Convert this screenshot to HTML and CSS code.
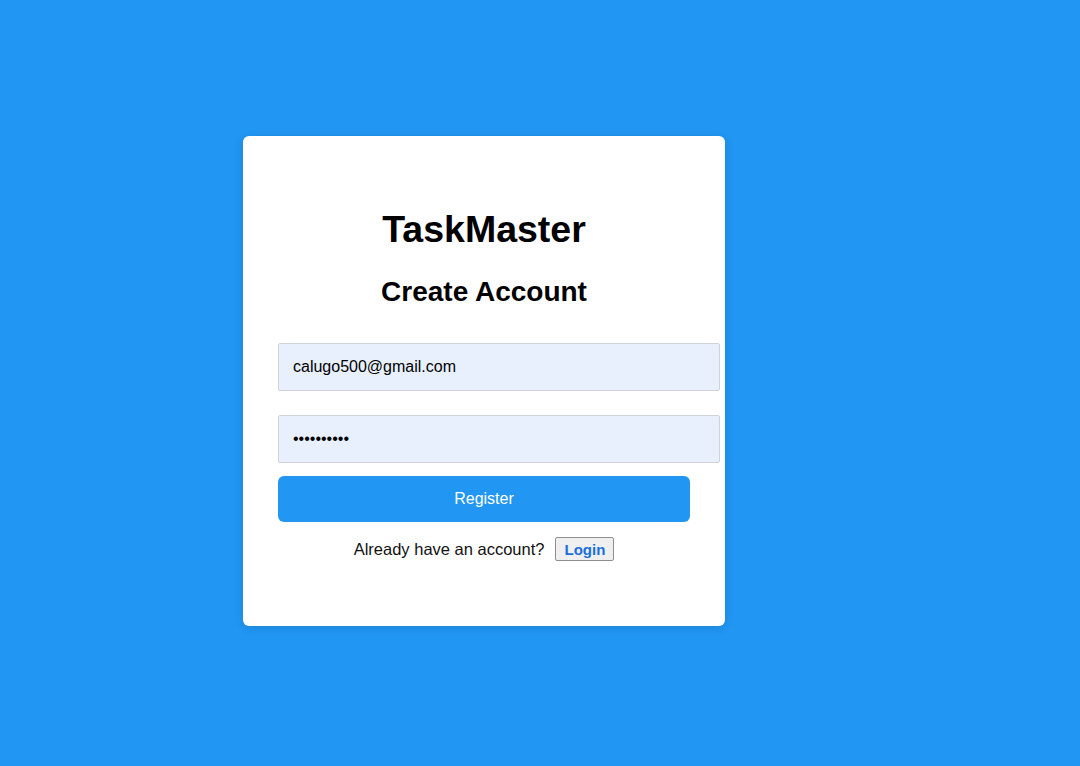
FILE: index.html
```html
<!DOCTYPE html>
<html lang="en">
<head>
<meta charset="utf-8">
<title>TaskMaster - Create Account</title>
<link rel="stylesheet" href="styles.css">
</head>
<body>
  <div class="card">
    <h1 class="title">TaskMaster</h1>
    <h2 class="subtitle">Create Account</h2>
    <form class="form">
      <input class="field" type="email" value="calugo500@gmail.com">
      <input class="field field-pass" type="password" value="1234567890">
      <button type="button" class="register">Register</button>
    </form>
    <div class="switch">
      <span class="switch-text">Already have an account?</span>
      <button type="button" class="login">Login</button>
    </div>
  </div>
</body>
</html>
```
FILE: styles.css
```css
html, body {
  margin: 0;
  height: 100%;
}
body {
  background: #2196f3;
  font-family: "Liberation Sans", Arial, sans-serif;
  padding: 136px 0 0 243px;
  box-sizing: border-box;
}
.card {
  width: 482px;
  height: 490px;
  box-sizing: border-box;
  background: #ffffff;
  border-radius: 6px;
  box-shadow: 0 2px 10px rgba(0, 0, 0, 0.12);
  padding: 72px 35px 0 35px;
  display: flex;
  flex-direction: column;
}
.title {
  margin: 0;
  font-size: 37.5px;
  line-height: 42px;
  font-weight: 700;
  text-align: center;
  color: #000;
}
.subtitle {
  margin: 26px 0 0;
  font-size: 28px;
  line-height: 32px;
  font-weight: 700;
  text-align: center;
  color: #000;
}
.form {
  margin-top: 35px;
  display: flex;
  flex-direction: column;
}
.field {
  width: 442px;
  height: 48px;
  box-sizing: border-box;
  padding: 0 14px;
  border: 1px solid #cfd3d8;
  border-radius: 2px;
  background: #e8f0fe;
  font-family: "Liberation Sans", Arial, sans-serif;
  font-size: 16px;
  color: #000;
  outline: none;
}
.field-pass {
  margin-top: 24px;
}
.register {
  margin-top: 13px;
  height: 46px;
  width: 100%;
  border: none;
  border-radius: 6px;
  background: #2196f3;
  color: #ffffff;
  font-family: "Liberation Sans", Arial, sans-serif;
  font-size: 16px;
}
.switch {
  margin-top: 15px;
  display: flex;
  justify-content: center;
  align-items: center;
  gap: 11px;
}
.switch-text {
  font-size: 16.5px;
  color: #111;
}
.login {
  height: 24px;
  padding: 0 8px;
  border: 1px solid #8f8f8f;
  border-radius: 2px;
  background: #efefef;
  color: #1a6fd8;
  font-family: "Liberation Sans", Arial, sans-serif;
  font-size: 15px;
  font-weight: 700;
}
```
